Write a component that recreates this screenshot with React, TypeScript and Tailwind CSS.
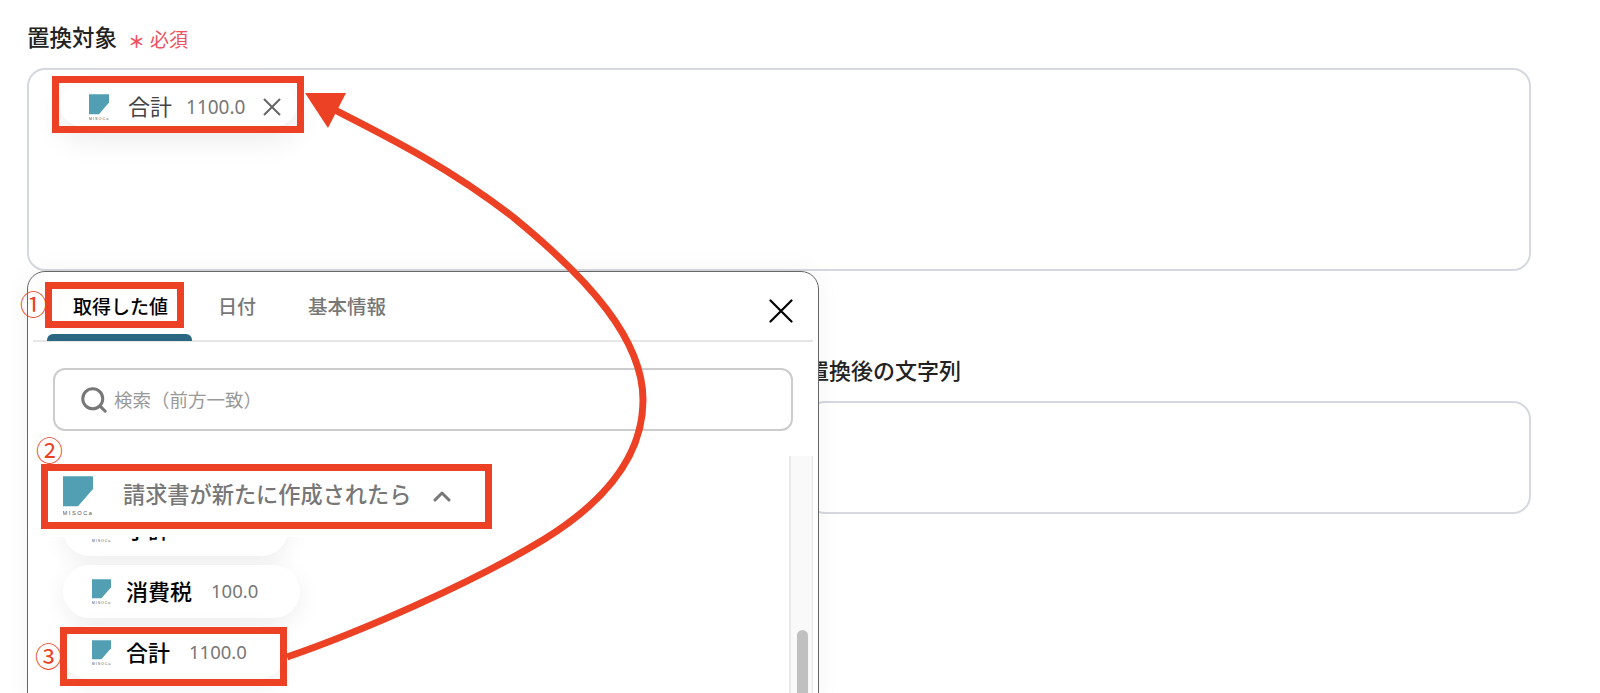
import { Search } from "lucide-react";

const jp = "font-['Noto_Sans','Noto_Sans_CJK_JP',sans-serif]";

function Misoca({ className }: { className: string }) {
  return (
    <svg viewBox="0 0 100 128" className={className}>
      <polygon points="0,0 100,0 100,42 50,100 0,100" fill="#529fb3" />
      <text x="50" y="128" textAnchor="middle" fontSize="19" letterSpacing="5" fill="#555" fontFamily="Liberation Sans, sans-serif">
        MISOCa
      </text>
    </svg>
  );
}

function Pill({ name, value, width }: { name: string; value: string; width: string }) {
  return (
    <div className={`${width} h-[53px] shrink-0 flex items-center pl-[29px] bg-white rounded-full shadow-[0_6px_24px_rgba(0,0,0,0.07)]`}>
      <Misoca className="w-[19px] h-[25px]" />
      <span className="ml-[15px] -mt-[1px] text-[22px] leading-[30px] font-medium text-black">{name}</span>
      <span className="ml-[19px] -mt-[1px] text-[18.5px] leading-[30px] text-[#777]">{value}</span>
    </div>
  );
}

function RedBox({ className }: { className: string }) {
  return <div className={`absolute border-[7px] border-[#ec4124] ${className}`} />;
}

function Popup() {
  return (
    <div className="absolute left-[27px] top-[271px] w-[792px] h-[440px] flex flex-col px-[5px] bg-white border border-[#666] rounded-[18px] overflow-hidden shadow-[0_0_24px_rgba(0,0,0,0.05)]">
      {/* tabs */}
      <div className="h-[70px] shrink-0 flex border-b-2 border-[#e6e6e6] pl-[14px] relative">
        <div className="w-[145px] flex flex-col">
          <div className="flex-1 pl-[26px] pt-[21px] text-[19px] leading-[28px] font-medium text-black">取得した値</div>
          <div className="h-[7px] bg-[#2a6780] rounded-t-[6px] translate-y-[1px]" />
        </div>
        <div className="pl-[26px] pr-[22px] pt-[21px] text-[19px] leading-[28px] font-medium text-[#777]">日付</div>
        <div className="pl-[30px] pt-[21px] text-[19.5px] leading-[28px] font-medium text-[#777]">基本情報</div>
        <svg viewBox="0 0 24 24" className="absolute right-[20px] top-[27px] w-[24px] h-[24px]">
          <path d="M1.5 1.5L22.5 22.5M22.5 1.5L1.5 22.5" stroke="#000" strokeWidth="2.2" strokeLinecap="round" />
        </svg>
      </div>
      {/* search */}
      <div className="mt-[26px] ml-[20px] mr-[20px] h-[63px] shrink-0 flex items-center pl-[24px] border-2 border-[#ccc] rounded-[12px]">
        <Search size={30} strokeWidth={2.4} className="text-[#777]" />
        <span className="ml-[5px] text-[18.5px] text-[#999]">検索（前方一致）</span>
      </div>
      {/* results */}
      <div className="mt-[25px] flex-1 flex min-h-0">
        <div className="flex-1 flex flex-col min-w-0">
          <div className="h-[81px] shrink-0 flex items-start pl-[30px] pt-[20px]">
            <Misoca className="w-[30px] h-[39px]" />
            <span className="ml-[30px] -mt-[1px] text-[22.2px] leading-[40px] font-medium text-[#777]">請求書が新たに作成されたら</span>
            <svg viewBox="0 0 18 12" className="ml-[22px] mt-[14px] w-[18px] h-[12px]">
              <path d="M2 10L9 3L16 10" fill="none" stroke="#777" strokeWidth="3" strokeLinecap="round" strokeLinejoin="round" />
            </svg>
          </div>
          <div className="flex-1 overflow-hidden pl-[30px] pr-[40px] pb-[30px]">
            <div className="-mt-[34px] flex flex-col gap-[8.5px]">
              <Pill name="小計" value="1000.0" width="w-[225px]" />
              <Pill name="消費税" value="100.0" width="w-[237px]" />
              <Pill name="合計" value="1100.0" width="w-[222px]" />
            </div>
          </div>
        </div>
        <div className="w-[24px] shrink-0 bg-[#f9f9f9] border-l-2 border-r border-[#e8e8e8] pt-[174px] pl-[6px]">
          <div className="w-[11px] h-[200px] bg-[#c0c0c0] rounded-full" />
        </div>
      </div>
    </div>
  );
}

export default function App() {
  return (
    <div className={`relative h-[693px] overflow-hidden bg-white ${jp}`}>
      <div className="pl-[27px] pr-[69px] pt-[22px]">
        <div className="h-[46px] flex items-start">
          <span className="text-[22.5px] leading-[32px] font-medium text-[#222]">置換対象</span>
          <span className="ml-[11px] mt-[4px] text-[17px] leading-[32px] font-bold text-[#ef5060]">＊</span>
          <span className="ml-[5px] mt-[2px] text-[19px] leading-[32px] text-[#ef5060]">必須</span>
        </div>
        <div className="h-[203px] border-2 border-[#d5d9df] rounded-[18px] relative">
          <div className="absolute left-[31px] top-[14px] w-[237px] h-[42px] flex items-center pl-[29px] bg-white rounded-full shadow-[0_12px_30px_rgba(0,0,0,0.09)]">
            <Misoca className="w-[20px] h-[26px] mt-[3px]" />
            <span className="ml-[19px] text-[22px] leading-[30px] mt-[2px] text-[#444]">合計</span>
            <span className="ml-[14px] text-[19px] leading-[30px] mt-[3px] text-[#777]">1100.0</span>
            <svg viewBox="0 0 18 18" className="ml-[18px] mt-[3px] w-[18px] h-[18px]">
              <path d="M1 1L17 17M17 1L1 17" stroke="#666" strokeWidth="2" />
            </svg>
          </div>
        </div>
        <div className="ml-[780px] mt-[81px]">
          <div className="h-[49px] text-[22px] leading-[36px] font-medium text-[#222]">置換後の文字列</div>
          <div className="h-[113px] border-2 border-[#d5d9df] rounded-[18px]" />
        </div>
      </div>

      <Popup />

      {/* annotations */}
      <RedBox className="left-[52px] top-[76px] w-[252px] h-[57px]" />
      <RedBox className="left-[45px] top-[282px] w-[139px] h-[46px]" />
      <RedBox className="left-[41px] top-[464px] w-[451px] h-[65px]" />
      <RedBox className="left-[60px] top-[627px] w-[227px] h-[59px]" />
      <span className="absolute left-[20px] top-[287px] text-[27px] leading-[36px] text-[#ec4124]">①</span>
      <span className="absolute left-[36px] top-[433px] text-[27px] leading-[36px] text-[#ec4124]">②</span>
      <span className="absolute left-[35px] top-[639px] text-[27px] leading-[36px] text-[#ec4124]">③</span>
      <svg viewBox="0 0 1600 693" className="absolute left-0 top-0 w-[1600px] h-[693px] pointer-events-none">
        <path d="M287 657C360 632 470 584 543 540C600 505 643 460 643 400C643 340 590 280 513 217C450 168 390 138 335 110" fill="none" stroke="#ec4124" strokeWidth="7" />
        <polygon points="305,93 346,93 328,128" fill="#ec4124" />
      </svg>
    </div>
  );
}
